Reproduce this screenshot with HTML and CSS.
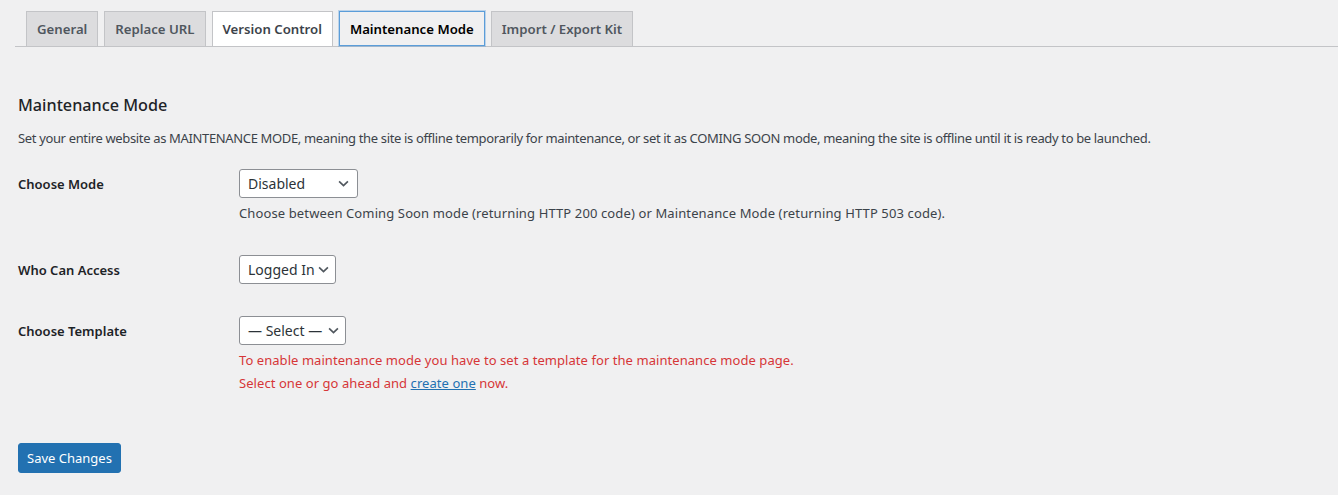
FILE: index.html
```html
<!DOCTYPE html>
<html lang="en">
<head>
<meta charset="utf-8">
<title>Maintenance Mode</title>
<link rel="stylesheet" href="styles.css">
</head>
<body>
<div class="wrap">
  <nav class="nav-tab-wrapper">
    <a class="nav-tab" href="#">General</a>
    <a class="nav-tab" href="#">Replace URL</a>
    <a class="nav-tab nav-tab-hover" href="#">Version Control</a>
    <a class="nav-tab nav-tab-active" href="#">Maintenance Mode</a>
    <a class="nav-tab" href="#">Import / Export Kit</a>
  </nav>

  <div class="panel">
    <h2 class="title">Maintenance Mode</h2>
    <p class="intro">Set your entire website as MAINTENANCE MODE, meaning the site is offline temporarily for maintenance, or set it as COMING SOON mode, meaning the site is offline until it is ready to be launched.</p>

    <div class="form-table">
      <div class="row row-mode">
        <div class="label">Choose Mode</div>
        <div class="field">
          <div class="select select-mode"><span>Disabled</span><svg viewBox="0 0 10 6" class="chev"><path d="M1 1l4 4 4-4"/></svg></div>
          <p class="description">Choose between Coming Soon mode (returning HTTP 200 code) or Maintenance Mode (returning HTTP 503 code).</p>
        </div>
      </div>
      <div class="row row-access">
        <div class="label">Who Can Access</div>
        <div class="field">
          <div class="select select-access"><span>Logged In</span><svg viewBox="0 0 10 6" class="chev"><path d="M1 1l4 4 4-4"/></svg></div>
        </div>
      </div>
      <div class="row row-template">
        <div class="label">Choose Template</div>
        <div class="field">
          <div class="select select-template"><span>— Select —</span><svg viewBox="0 0 10 6" class="chev"><path d="M1 1l4 4 4-4"/></svg></div>
          <div class="error">
            <p>To enable maintenance mode you have to set a template for the maintenance mode page.</p>
            <p>Select one or go ahead and <a href="#">create one</a> now.</p>
          </div>
        </div>
      </div>
    </div>

    <div class="submit">
      <button class="button-primary" type="button">Save Changes</button>
    </div>
  </div>
</div>
</body>
</html>
```

FILE: styles.css
```css
html, body {
  margin: 0;
  padding: 0;
  background: #f0f0f1;
}
body {
  font-family: "Noto Sans", "Open Sans", sans-serif;
  font-size: 13px;
  color: #3c434a;
  height: 495px;
  overflow: hidden;
}
.wrap {
  padding: 0 0 0 15px;
}
.nav-tab-wrapper {
  display: flex;
  align-items: flex-start;
  padding-top: 11px;
  border-bottom: 1px solid #c3c4c7;
}
.nav-tab {
  display: block;
  box-sizing: border-box;
  height: 35px;
  margin-left: 6px;
  padding: 0 10px;
  border: 1px solid #c3c4c7;
  border-bottom: none;
  background: #dcdcde;
  color: #50575e;
  font-size: 13.2px;
  font-weight: 600;
  line-height: 34px;
  text-decoration: none;
  white-space: nowrap;
}
.nav-tab:first-child {
  margin-left: 11px;
}
.nav-tab-hover {
  background: #fff;
  color: #3c434a;
}
.nav-tab-active {
  background: #f0f0f1;
  color: #000;
  border: 1px solid #5b9dd9;
  box-shadow: 0 0 0 1px rgba(91,157,217,0.35);
}
.panel {
  padding: 0 0 0 3px;
}
.title {
  margin: 47px 0 0;
  font-size: 16.2px;
  font-weight: 500;
  color: #1d2327;
  line-height: 22px;
}
.intro {
  margin: 14px 0 0;
  line-height: 16px;
  letter-spacing: -0.35px;
}
.form-table {
  padding-top: 23px;
}
.row {
  display: flex;
}
.label {
  width: 221px;
  flex: none;
  color: #1d2327;
  font-weight: 600;
  line-height: 20px;
  padding-top: 5px;
}
.row-access { margin-top: 33px; }
.row-template { margin-top: 32px; }
.field {
  display: flex;
  flex-direction: column;
  align-items: flex-start;
}
.select {
  box-sizing: border-box;
  height: 29px;
  display: flex;
  align-items: center;
  justify-content: space-between;
  padding: 0 8px 0 8px;
  background: #fff;
  border: 1px solid #8c8f94;
  border-radius: 3px;
  color: #2c3338;
  font-size: 14px;
}
.select-mode { width: 119px; }
.select-access { width: 97px; padding-right: 6px; }
.select-template { width: 107px; padding-right: 6px; }
.chev {
  width: 11px;
  height: 7px;
  fill: none;
  stroke: #50575e;
  stroke-width: 1.5;
}
.description {
  margin: 6px 0 0;
  line-height: 18px;
  letter-spacing: 0.12px;
}
.error {
  margin-top: 4px;
  color: #d63638;
  letter-spacing: 0.06px;
}
.error p {
  margin: 0;
  line-height: 23px;
}
.error a {
  color: #2271b1;
  text-decoration: underline;
}
.submit {
  margin-top: 48px;
}
.button-primary {
  box-sizing: border-box;
  height: 30px;
  padding: 0 8px;
  background: #2271b1;
  border: 1px solid #2271b1;
  border-radius: 3px;
  color: #fff;
  font-family: inherit;
  font-size: 13px;
  line-height: 28px;
  cursor: pointer;
}
```
